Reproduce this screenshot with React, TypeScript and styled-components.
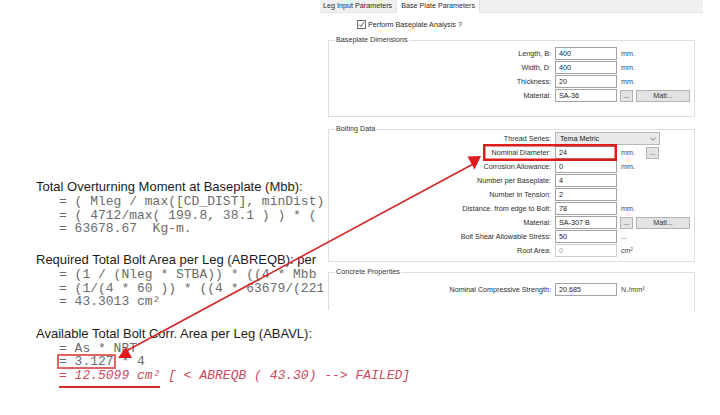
import React from "react";
import styled, { createGlobalStyle } from "styled-components";

const Global = createGlobalStyle`
  html, body { margin: 0; padding: 0; background: #fff; }
  body { font-family: "Liberation Sans", Arial, sans-serif; }
`;

const Page = styled.div`
  position: relative;
  width: 720px;
  height: 415px;
  overflow: hidden;
  background: #fff;
`;

/* ---------- document text on the left ---------- */

const Doc = styled.div`
  padding: 178px 0 0 36px;
`;

const Section = styled.section<{ $gap?: number; $clip?: boolean }>`
  margin-top: ${(p) => p.$gap ?? 0}px;
  width: ${(p) => (p.$clip ? "287px" : "auto")};
  overflow: ${(p) => (p.$clip ? "hidden" : "visible")};
`;

const Heading = styled.div`
  font: 13px/17px "Liberation Sans", Arial, sans-serif;
  color: #1c1c1c;
  white-space: nowrap;
`;

const Code = styled.div<{ $tone?: "error" }>`
  font-family: "Liberation Mono", "Courier New", monospace;
  font-size: 13px;
  line-height: 13.5px;
  font-style: ${(p) => (p.$tone === "error" ? "italic" : "normal")};
  color: ${(p) => (p.$tone === "error" ? "#cc4a5e" : "#6b6b6b")};
  padding-left: 23px;
  white-space: pre;
`;

const Boxed = styled.span`
  outline: 2px solid #e06464;
  outline-offset: -2px;
  padding: 0 2px;
  margin: 0 -2px;
`;

const Underlined = styled.span`
  padding-bottom: 3px;
  border-bottom: 2px solid #d42a2a;
`;

/* ---------- dialog panel ---------- */

const Panel = styled.div`
  position: absolute;
  top: 0;
  left: 320px;
  width: 385px;
  height: 310px;
  overflow: hidden;
  font: 7.2px/9px "Liberation Sans", Arial, sans-serif;
  color: #2b2b2b;
`;

const TabBar = styled.div`
  display: flex;
  height: 13px;
  margin-right: 2px;
  background: #f0f0f0;
  border-bottom: 1px solid #e4e4e4;
  box-sizing: border-box;
`;

const Tab = styled.div<{ $active?: boolean }>`
  height: 13px;
  line-height: 12px;
  padding: ${(p) => (p.$active ? "0 4px" : "0 4px 0 3px")};
  background: ${(p) => (p.$active ? "#fff" : "transparent")};
  border-left: ${(p) => (p.$active ? "1px solid #e0e0e0" : "none")};
  border-right: ${(p) => (p.$active ? "1px solid #e0e0e0" : "none")};
  white-space: nowrap;
`;

const Body = styled.div`
  margin-left: 5px;
  height: 297px;
  background: #fff;
  overflow: hidden;
`;

const CheckRow = styled.div`
  display: flex;
  align-items: center;
  gap: 2px;
  height: 9px;
  margin: 7px 0 0 32px;
`;

const CheckBox = styled.span`
  display: inline-flex;
  width: 9px;
  height: 9px;
  box-sizing: border-box;
  border: 1px solid #6e6e6e;
  background: #fff;
`;

const Group = styled.div<{ $top: number; $bottom: number }>`
  margin: ${(p) => p.$top}px 10px 0 3px;
  padding: 0 4px ${(p) => p.$bottom}px 0;
  border: 1px solid #dedede;
`;

const Legend = styled.div`
  width: fit-content;
  height: 10px;
  line-height: 10px;
  margin: -6px 0 0 6px;
  padding: 0 1px;
  background: #fff;
  color: #333;
`;

const Grid = styled.div<{ $offset: number }>`
  display: grid;
  grid-template-columns: 1fr 62px 70px;
  grid-auto-rows: 13px;
  column-gap: 3px;
  row-gap: 1px;
  margin-top: ${(p) => p.$offset}px;
`;

const Label = styled.label`
  text-align: right;
  padding-right: 1px;
  line-height: 13px;
  white-space: nowrap;
`;

const Field = styled.input<{ $disabled?: boolean }>`
  box-sizing: border-box;
  width: 62px;
  height: 13px;
  margin: 0;
  padding: 0 3px;
  border: 1px solid ${(p) => (p.$disabled ? "#cfcfcf" : "#a3a3a3")};
  background: #fff;
  font: inherit;
  color: ${(p) => (p.$disabled ? "#a0a0a0" : "#222")};
  outline: none;
`;

const Extras = styled.div`
  display: flex;
  align-items: center;
  gap: 3px;
`;

const Unit = styled.span<{ $w?: number }>`
  padding-left: 1px;
  width: ${(p) => (p.$w ? `${p.$w}px` : "auto")};
  flex: none;
  color: #444;
  white-space: nowrap;
`;

const Button = styled.button<{ $w: number }>`
  box-sizing: border-box;
  width: ${(p) => p.$w}px;
  height: 12px;
  margin: 0;
  padding: 0;
  border: 1px solid #b3b3b3;
  background: #e3e3e3;
  font: inherit;
  line-height: 10px;
  color: #333;
`;

const Select = styled.div`
  grid-column: 2 / span 2;
  box-sizing: border-box;
  width: 105px;
  height: 13px;
  display: flex;
  align-items: center;
  justify-content: space-between;
  padding: 0 3px 0 4px;
  border: 1px solid #b8b8b8;
  background: #e9e9e9;
  color: #222;
`;

/* ---------- annotations ---------- */

const Overlay = styled.svg`
  position: absolute;
  top: 0;
  left: 0;
  width: 720px;
  height: 415px;
  pointer-events: none;
`;

type Row = {
  label: string;
  value: string;
  extra?: React.ReactNode;
  disabled?: boolean;
};

const Mm = <Unit>mm.</Unit>;
const MatlButtons = (
  <>
    <Button $w={13}>...</Button>
    <Button $w={54}>Matl...</Button>
  </>
);

const baseplateRows: Row[] = [
  { label: "Length, B:", value: "400", extra: Mm },
  { label: "Width, D:", value: "400", extra: Mm },
  { label: "Thickness:", value: "20", extra: Mm },
  { label: "Material:", value: "SA-36", extra: MatlButtons },
];

const boltingRows: Row[] = [
  {
    label: "Nominal Diameter:",
    value: "24",
    extra: (
      <>
        <Unit $w={22}>mm.</Unit>
        <Button $w={13}>...</Button>
      </>
    ),
  },
  { label: "Corrosion Allowance:", value: "0", extra: Mm },
  { label: "Number per Baseplate:", value: "4" },
  { label: "Number in Tension:", value: "2" },
  { label: "Distance. from edge to Bolt:", value: "78", extra: Mm },
  { label: "Material:", value: "SA-307 B", extra: MatlButtons },
  { label: "Bolt Shear Allowable Stress:", value: "50", extra: <Unit>...</Unit> },
  { label: "Root Area:", value: "0", extra: <Unit>cm²</Unit>, disabled: true },
];

const FieldRows = ({ rows }: { rows: Row[] }) => (
  <>
    {rows.map((r) => (
      <React.Fragment key={r.label + r.value}>
        <Label>{r.label}</Label>
        <Field readOnly value={r.value} $disabled={r.disabled} />
        <Extras>{r.extra}</Extras>
      </React.Fragment>
    ))}
  </>
);

export default function App() {
  return (
    <>
      <Global />
      <Page>
        <Doc>
          <Section $clip>
            <Heading>Total Overturning Moment at Baseplate (Mbb):</Heading>
            <Code>= ( Mleg / max([CD_DIST], minDist)</Code>
            <Code>= ( 4712/max( 199.8, 38.1 ) ) * (</Code>
            <Code>= 63678.67  Kg-m.</Code>
          </Section>
          <Section $gap={15.7} $clip>
            <Heading>Required Total Bolt Area per Leg (ABREQB): per</Heading>
            <Code>= (1 / (Nleg * STBA)) * ((4 * Mbb</Code>
            <Code>= (1/(4 * 60 )) * ((4 * 63679/(221</Code>
            <Code>= 43.3013 cm²</Code>
          </Section>
          <Section $gap={16}>
            <Heading>Available Total Bolt Corr. Area per Leg (ABAVL):</Heading>
            <Code>= As * NBT</Code>
            <Code>
              <Boxed>= 3.127</Boxed> * 4
            </Code>
            <Code $tone="error">
              <Underlined>= 12.5099 cm²</Underlined> [ &lt; ABREQB ( 43.30) --&gt; FAILED]
            </Code>
          </Section>
        </Doc>

        <Panel>
          <TabBar>
            <Tab>Leg Input Parameters</Tab>
            <Tab $active>Base Plate Parameters</Tab>
          </TabBar>

          <Body>
            <CheckRow>
              <CheckBox>
                <svg width="7" height="7" viewBox="0 0 7 7">
                  <path d="M1 3.6 L2.8 5.4 L6 1.2" fill="none" stroke="#333" strokeWidth="0.9" />
                </svg>
              </CheckBox>
              <span>Perform Baseplate Analysis ?</span>
            </CheckRow>

            <Group $top={11} $bottom={14}>
              <Legend>Baseplate Dimensions</Legend>
              <Grid $offset={2}>
                <FieldRows rows={baseplateRows} />
              </Grid>
            </Group>

            <Group $top={12} $bottom={4}>
              <Legend>Bolting Data</Legend>
              <Grid $offset={-2}>
                <Label>Thread Series:</Label>
                <Select>
                  <span>Tema Metric</span>
                  <svg width="6" height="4" viewBox="0 0 6 4">
                    <path d="M0.5 0.8 L3 3.2 L5.5 0.8" fill="none" stroke="#555" strokeWidth="0.8" />
                  </svg>
                </Select>
                <FieldRows rows={boltingRows} />
              </Grid>
            </Group>

            <Group $top={10} $bottom={20}>
              <Legend>Concrete Properties</Legend>
              <Grid $offset={6}>
                <FieldRows
                  rows={[
                    {
                      label: "Nominal Compressive Strength:",
                      value: "20.685",
                      extra: <Unit>N./mm²</Unit>,
                    },
                  ]}
                />
              </Grid>
            </Group>
          </Body>
        </Panel>

        <Overlay viewBox="0 0 720 415">
          <rect x="484.25" y="145.25" width="131.5" height="14.5" fill="none" stroke="#e01b1b" strokeWidth="2.5" />
          <line x1="128" y1="350" x2="475" y2="163" stroke="#d22a2a" strokeWidth="1.6" />
          <polygon points="467.5,156.5 481,156 474.5,169.5" fill="#e01b1b" />
          <polygon points="126,347 118,358 132,358" fill="#e01b1b" />
        </Overlay>
      </Page>
    </>
  );
}
